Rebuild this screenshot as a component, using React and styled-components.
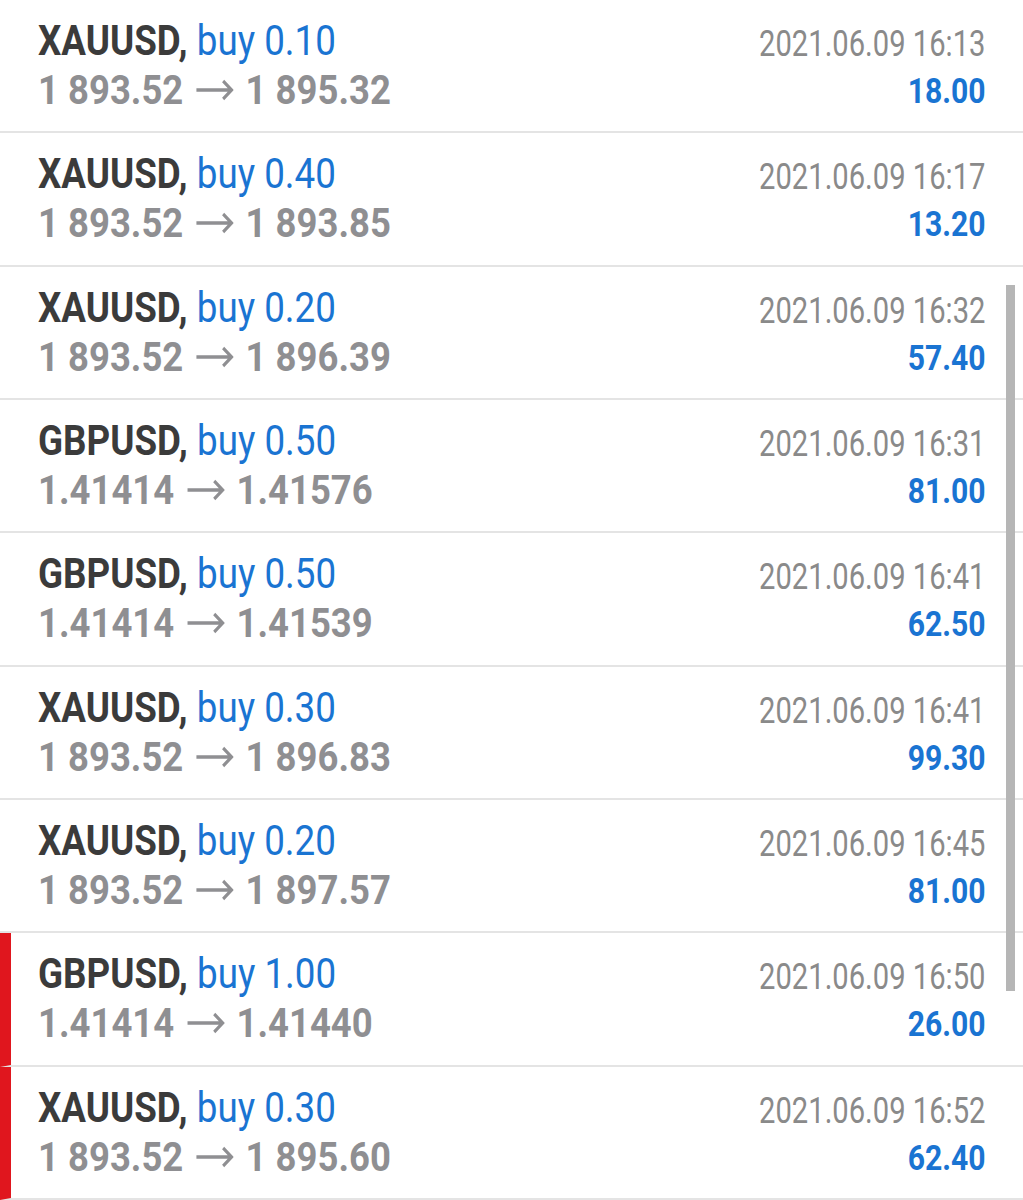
import React from "react";
import styled, { createGlobalStyle } from "styled-components";

const Global = createGlobalStyle`
  html, body { margin: 0; padding: 0; background: #fff; }
  body { font-family: "Roboto", "Liberation Sans", sans-serif; }
`;

const deals = [
  { sym: "XAUUSD", vol: "0.10", open: "1 893.52", close: "1 895.32", time: "2021.06.09 16:13", profit: "18.00" },
  { sym: "XAUUSD", vol: "0.40", open: "1 893.52", close: "1 893.85", time: "2021.06.09 16:17", profit: "13.20" },
  { sym: "XAUUSD", vol: "0.20", open: "1 893.52", close: "1 896.39", time: "2021.06.09 16:32", profit: "57.40" },
  { sym: "GBPUSD", vol: "0.50", open: "1.41414", close: "1.41576", time: "2021.06.09 16:31", profit: "81.00" },
  { sym: "GBPUSD", vol: "0.50", open: "1.41414", close: "1.41539", time: "2021.06.09 16:41", profit: "62.50" },
  { sym: "XAUUSD", vol: "0.30", open: "1 893.52", close: "1 896.83", time: "2021.06.09 16:41", profit: "99.30" },
  { sym: "XAUUSD", vol: "0.20", open: "1 893.52", close: "1 897.57", time: "2021.06.09 16:45", profit: "81.00" },
  { sym: "GBPUSD", vol: "1.00", open: "1.41414", close: "1.41440", time: "2021.06.09 16:50", profit: "26.00", flag: true },
  { sym: "XAUUSD", vol: "0.30", open: "1 893.52", close: "1 895.60", time: "2021.06.09 16:52", profit: "62.40", flag: true },
];

const List = styled.div`
  position: relative;
  width: 1023px;
  height: 1200px;
  overflow: hidden;
  background: #fff;
`;

const Row = styled.div`
  box-sizing: border-box;
  height: 133.33px;
  display: flex;
  justify-content: space-between;
  align-items: flex-start;
  padding: 18px 38px 0 ${(p) => (p.$flag ? 27 : 38)}px;
  border-bottom: 2px solid #e4e4e4;
  border-left: ${(p) => (p.$flag ? "11px solid #e0161e" : "none")};
`;

const Left = styled.div`
  display: flex;
  flex-direction: column;
`;

const Right = styled.div`
  display: flex;
  flex-direction: column;
  align-items: flex-end;
  padding-top: 4px;
`;

const Cond = styled.span`
  display: inline-block;
  transform: scaleX(${(p) => p.$k || 0.86});
  transform-origin: ${(p) => (p.$right ? "right" : "left")} center;
  white-space: nowrap;
`;

const Title = styled.div`
  font-size: 42px;
  line-height: 46px;
  white-space: nowrap;
`;

const Symbol = styled.span`
  font-weight: 700;
  color: #3b3b3b;
`;

const Side = styled.span`
  font-weight: 400;
  color: #1a74d2;
`;

const Prices = styled.div`
  margin-top: 3px;
  font-size: 41px;
  line-height: 46px;
  font-weight: 700;
  color: #8f8f92;
  white-space: nowrap;
`;

const ArrowSvg = styled.svg`
  display: inline-block;
  width: 43px;
  height: 22px;
  margin: 0 13px 0 14px;
  vertical-align: 3px;
`;

const Time = styled.div`
  font-size: 36px;
  line-height: 44px;
  font-weight: 400;
  color: #8a8a8a;
  white-space: nowrap;
`;

const Profit = styled.div`
  margin-top: 3px;
  font-size: 35px;
  line-height: 46px;
  font-weight: 700;
  color: #1a74d2;
  white-space: nowrap;
`;

const Scrollbar = styled.div`
  position: absolute;
  left: 1006px;
  top: 285px;
  width: 9px;
  height: 706px;
  background: #b6b6b6;
`;

function Arrow() {
  return (
    <ArrowSvg viewBox="0 0 43 22" aria-hidden="true">
      <path
        d="M1 11 H40 M31 2 L40.5 11 L31 20"
        fill="none"
        stroke="#8f8f92"
        strokeWidth="3.4"
        strokeLinecap="butt"
        strokeLinejoin="miter"
      />
    </ArrowSvg>
  );
}

export default function App() {
  return (
    <>
      <Global />
      <List>
        {deals.map((d, i) => (
          <Row key={i} $flag={d.flag}>
            <Left>
              <Title>
                <Cond $k={0.875}>
                  <Symbol>{d.sym},</Symbol> <Side>buy {d.vol}</Side>
                </Cond>
              </Title>
              <Prices>
                <Cond $k={0.89}>
                  {d.open}
                  <Arrow />
                  {d.close}
                </Cond>
              </Prices>
            </Left>
            <Right>
              <Time>
                <Cond $right $k={0.81}>{d.time}</Cond>
              </Time>
              <Profit>
                <Cond $right>{d.profit}</Cond>
              </Profit>
            </Right>
          </Row>
        ))}
        <Scrollbar />
      </List>
    </>
  );
}
